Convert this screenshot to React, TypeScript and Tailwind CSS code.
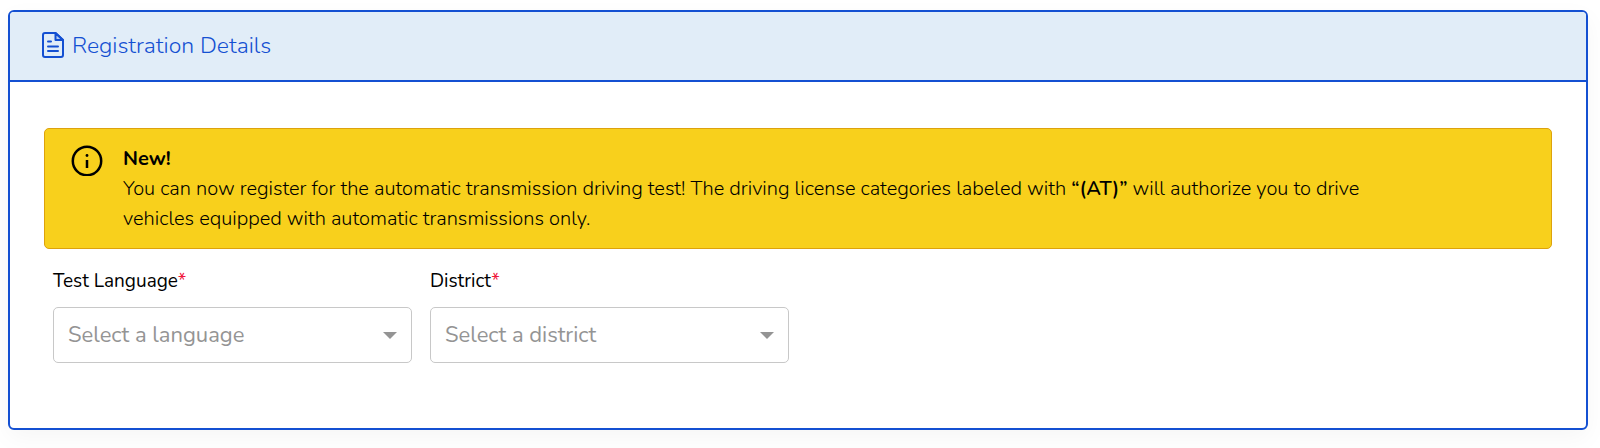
import { useId } from "react";

const fields = [
  {
    name: "language",
    label: "Test Language",
    placeholder: "Select a language",
    options: ["English", "French", "Arabic"],
  },
  {
    name: "district",
    label: "District",
    placeholder: "Select a district",
    options: ["North", "South", "East", "West"],
  },
];

function DocumentIcon() {
  return (
    <svg
      viewBox="0 1 22 28"
      className="w-[22px] h-7 shrink-0"
      fill="none"
      stroke="currentColor"
      strokeWidth="2"
      strokeLinecap="round"
      strokeLinejoin="round"
      aria-hidden="true"
    >
      <path d="M13.5 2H3A2 2 0 0 0 1 4V24A2 2 0 0 0 3 26H19A2 2 0 0 0 21 24V9Z" />
      <path d="M13.5 2V9H21Z" fill="currentColor" fillOpacity="0.2" />
      <path d="M6 10.500H9M6 15.500H16M6 20H16" />
    </svg>
  );
}

function InfoIcon() {
  return (
    <svg viewBox="0 0 32 32" className="w-8 h-8 shrink-0" aria-hidden="true">
      <circle cx="16" cy="17" r="14.200" fill="none" stroke="currentColor" strokeWidth="2.500" />
      <circle cx="16" cy="11.500" r="1.400" fill="currentColor" />
      <path d="M16 16V24" stroke="currentColor" strokeWidth="2.500" />
    </svg>
  );
}

type SelectFieldProps = (typeof fields)[number];

function SelectField({ name, label, placeholder, options }: SelectFieldProps) {
  const id = useId();

  return (
    <div className="px-[9px]">
      <label htmlFor={id} className="block text-[19px] leading-7 font-normal">
        {label}
        <span className="text-[#f0163a]">*</span>
      </label>
      <div className="relative mt-3">
        <select
          id={id}
          name={name}
          required
          defaultValue=""
          className="block w-full h-14 appearance-none rounded-[5px] border border-[#c8c8c8] bg-white pl-3.5 pr-10 text-[22px] font-normal text-[#949494]"
        >
          <option value="" disabled>
            {placeholder}
          </option>
          {options.map((option) => (
            <option key={option}>{option}</option>
          ))}
        </select>
        <svg
          viewBox="0 0 14 7"
          className="pointer-events-none absolute right-[15px] top-[25px] w-3.5 h-[7px] text-[#949494]"
          aria-hidden="true"
        >
          <path d="M0 0H14L7 7Z" fill="currentColor" />
        </svg>
      </div>
    </div>
  );
}

export default function App() {
  return (
    <main className="bg-white pl-2 pr-3 pt-2.5 pb-[18px] font-['Nunito','Lato',sans-serif] font-light text-black">
      <section className="rounded-md border-2 border-[#1450d2] bg-white shadow-[0_8px_24px_rgba(0,0,0,0.04)]">
        <header className="flex items-center gap-2 h-[70px] rounded-t border-b-2 border-[#1450d2] bg-[#e1edf8] px-8 text-[#1450d2]">
          <DocumentIcon />
          <h2 className="text-[23px] leading-8 font-light">Registration Details</h2>
        </header>

        <div className="px-[34px] pt-[46px] pb-[65px]">
          {/* Notice */}
          <div className="flex gap-5 rounded-[5px] border border-[#dda20d] bg-[#f8d01c] pl-[26px] pr-[150px] pt-[15px] pb-[14px]">
            <InfoIcon />
            <div className="text-[20px] leading-[30px]">
              <strong className="block font-bold">New!</strong>
              <p>
                You can now register for the automatic transmission driving test! The driving
                license categories labeled with <strong className="font-semibold">“(AT)”</strong>{" "}
                will authorize you to drive vehicles equipped with automatic transmissions only.
              </p>
            </div>
          </div>

          {/* Fields */}
          <div className="grid grid-cols-4 pt-[18px]">
            {fields.map((field) => (
              <SelectField key={field.name} {...field} />
            ))}
          </div>
        </div>
      </section>
    </main>
  );
}
